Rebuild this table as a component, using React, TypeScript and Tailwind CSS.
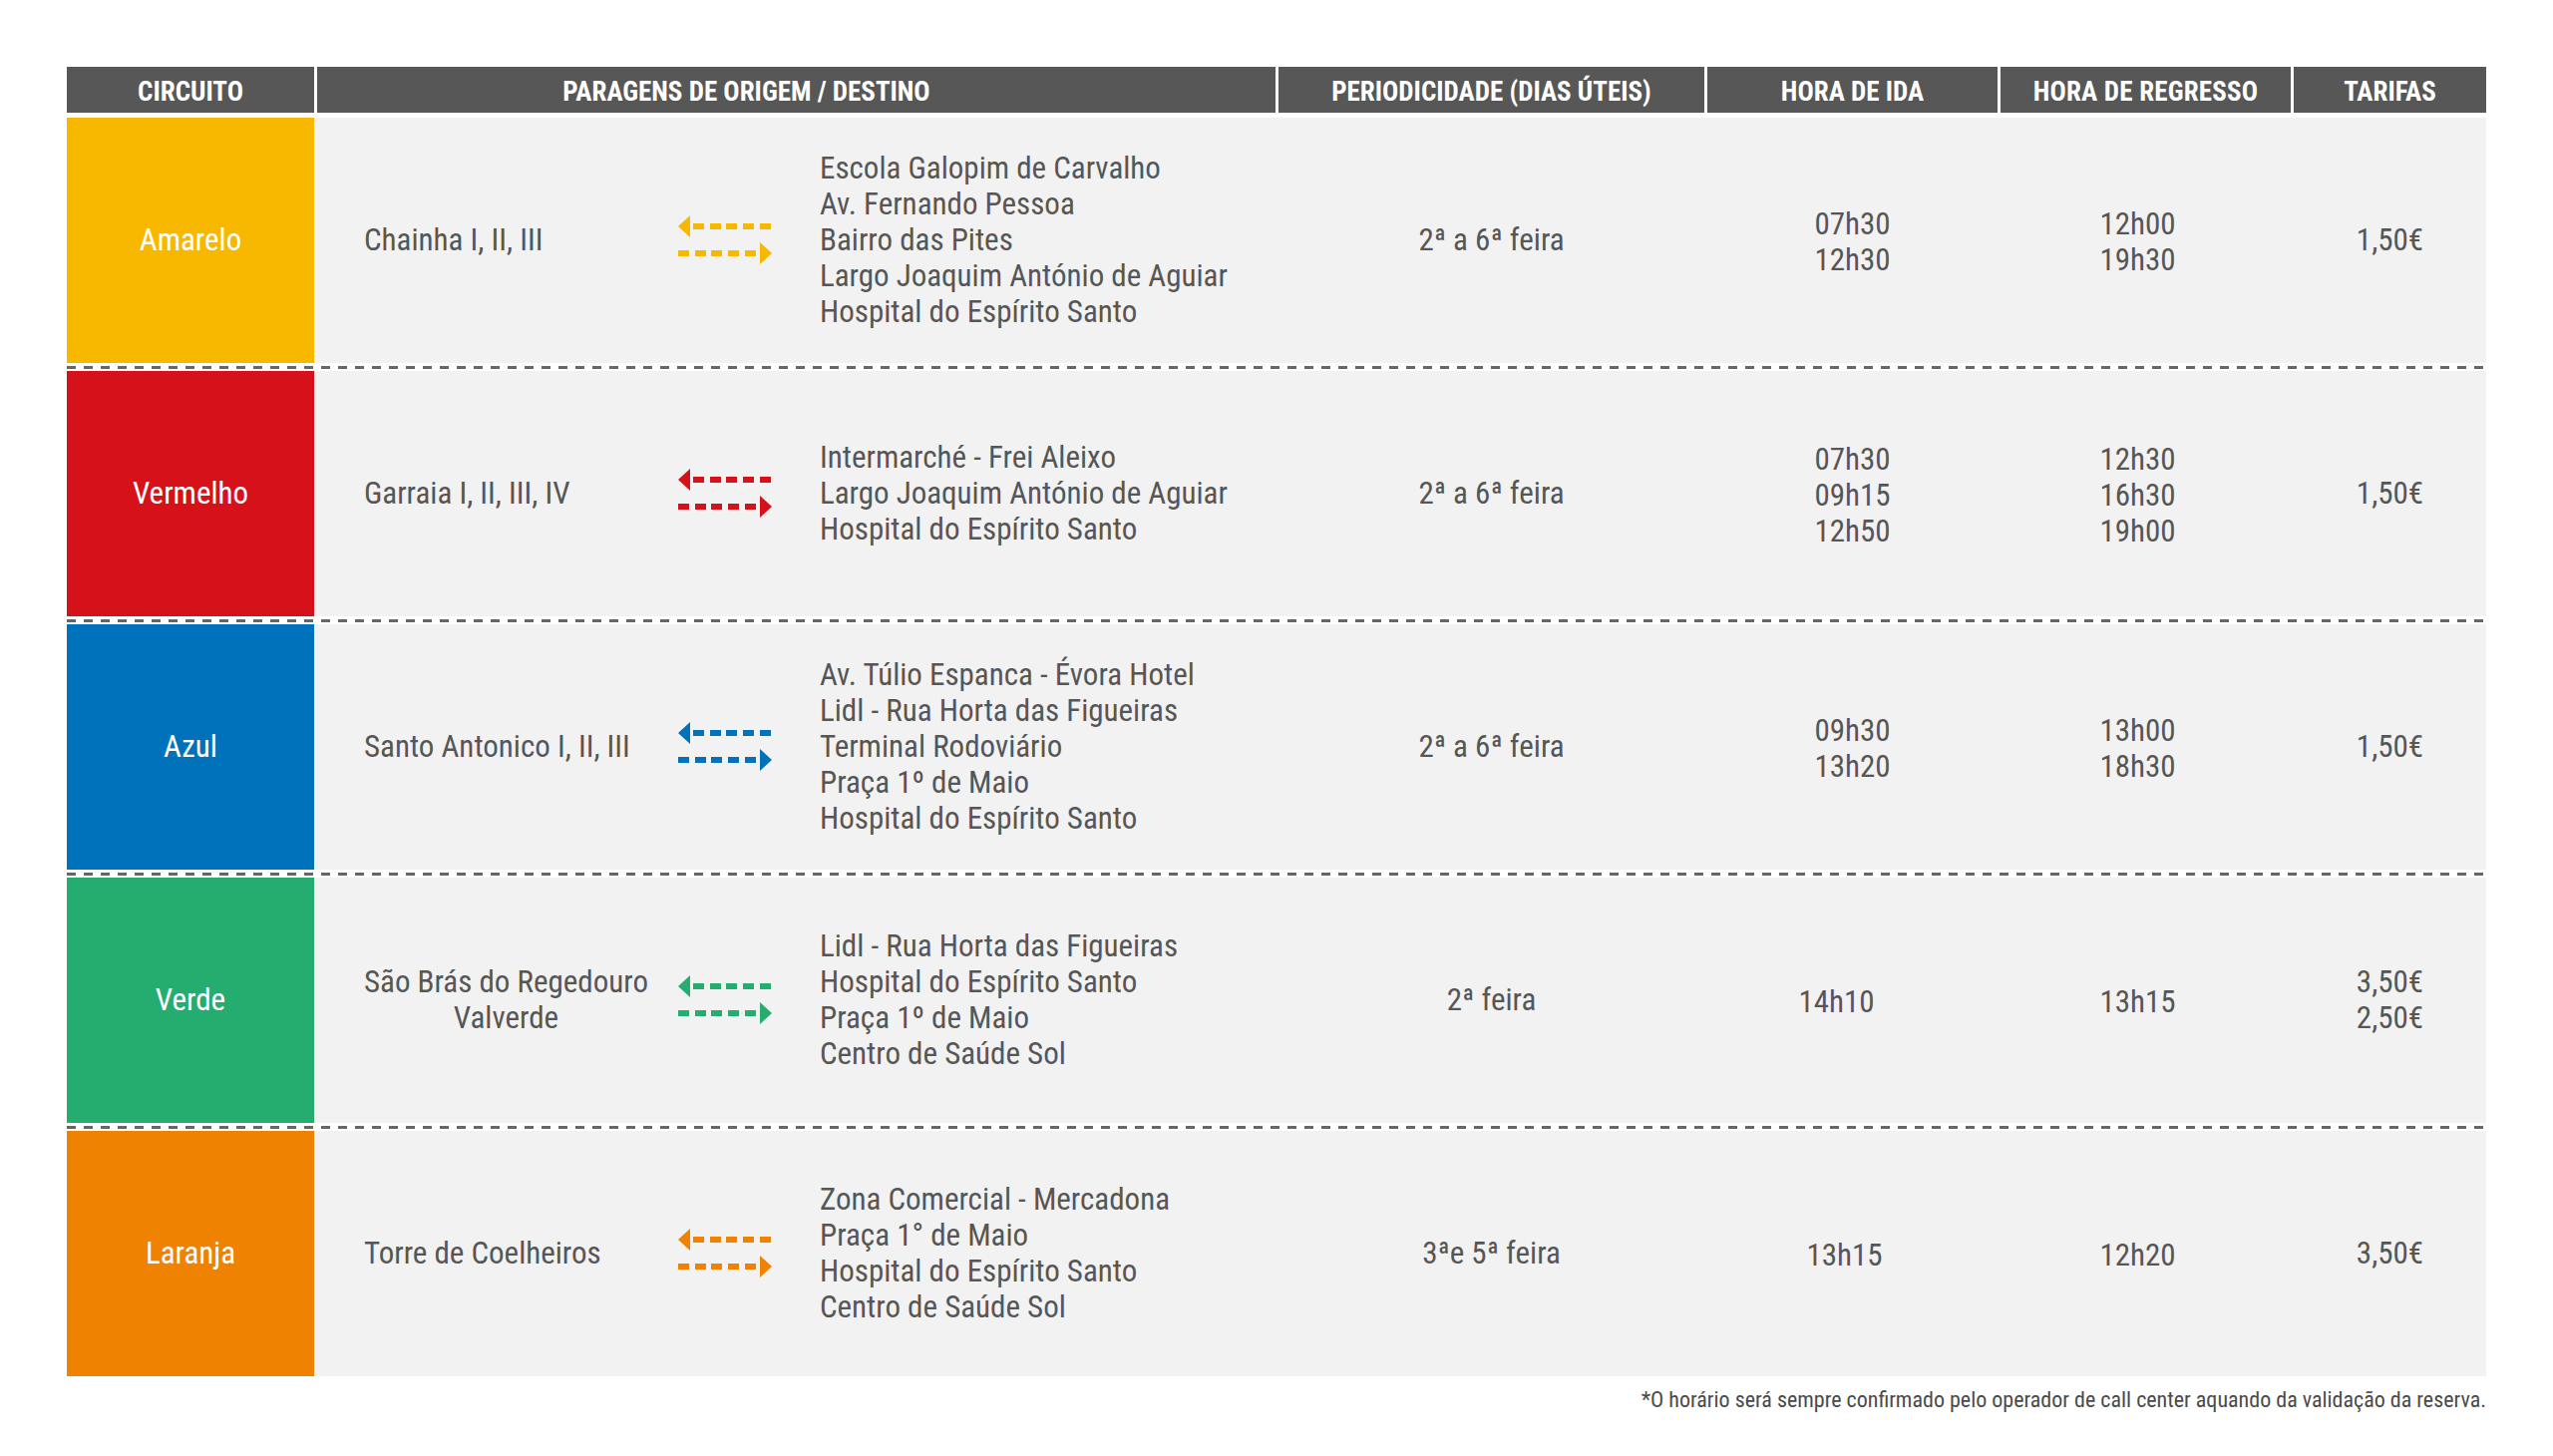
import React from 'react'

type Row = {
  name: string
  bg: string
  arrow: string
  origin: string[]
  stops: string[]
  period: string
  ida: string[]
  idaShift?: string
  regresso: string[]
  tarifas: string[]
}

const rows: Row[] = [
  {
    name: 'Amarelo',
    bg: 'bg-[#f9b800]',
    arrow: '#f9b800',
    origin: ['Chainha I, II, III'],
    stops: [
      'Escola Galopim de Carvalho',
      'Av. Fernando Pessoa',
      'Bairro das Pites',
      'Largo Joaquim António de Aguiar',
      'Hospital do Espírito Santo',
    ],
    period: '2ª a 6ª feira',
    ida: ['07h30', '12h30'],
    regresso: ['12h00', '19h30'],
    tarifas: ['1,50€'],
  },
  {
    name: 'Vermelho',
    bg: 'bg-[#d7111a]',
    arrow: '#d7111a',
    origin: ['Garraia I, II, III, IV'],
    stops: ['Intermarché - Frei Aleixo', 'Largo Joaquim António de Aguiar', 'Hospital do Espírito Santo'],
    period: '2ª a 6ª feira',
    ida: ['07h30', '09h15', '12h50'],
    regresso: ['12h30', '16h30', '19h00'],
    tarifas: ['1,50€'],
  },
  {
    name: 'Azul',
    bg: 'bg-[#0072bb]',
    arrow: '#0072bb',
    origin: ['Santo Antonico I, II, III'],
    stops: [
      'Av. Túlio Espanca - Évora Hotel',
      'Lidl - Rua Horta das Figueiras',
      'Terminal Rodoviário',
      'Praça 1º de Maio',
      'Hospital do Espírito Santo',
    ],
    period: '2ª a 6ª feira',
    ida: ['09h30', '13h20'],
    regresso: ['13h00', '18h30'],
    tarifas: ['1,50€'],
  },
  {
    name: 'Verde',
    bg: 'bg-[#25ac6f]',
    arrow: '#25ac6f',
    origin: ['São Brás do Regedouro', 'Valverde'],
    stops: ['Lidl - Rua Horta das Figueiras', 'Hospital do Espírito Santo', 'Praça 1º de Maio', 'Centro de Saúde Sol'],
    period: '2ª feira',
    ida: ['14h10'],
    idaShift: 'pr-[32px]',
    regresso: ['13h15'],
    tarifas: ['3,50€', '2,50€'],
  },
  {
    name: 'Laranja',
    bg: 'bg-[#ef8200]',
    arrow: '#ef8200',
    origin: ['Torre de Coelheiros'],
    stops: ['Zona Comercial - Mercadona', 'Praça 1° de Maio', 'Hospital do Espírito Santo', 'Centro de Saúde Sol'],
    period: '3ªe 5ª feira',
    ida: ['13h15'],
    idaShift: 'pr-[16px]',
    regresso: ['12h20'],
    tarifas: ['3,50€'],
  },
]

const headers = [
  { label: 'CIRCUITO', w: 'w-[248px]' },
  { label: 'PARAGENS DE ORIGEM / DESTINO', w: 'w-[961px] pr-[100px]' },
  { label: 'PERIODICIDADE (DIAS ÚTEIS)', w: 'w-[427px]' },
  { label: 'HORA DE IDA', w: 'w-[291px]' },
  { label: 'HORA DE REGRESSO', w: 'w-[291px] tracking-[0.2px]' },
  { label: 'TARIFAS', w: 'w-[193px]' },
]

function Arrows({ color }: { color: string }) {
  return (
    <svg width="95" height="50" viewBox="0 0 95 50" className="shrink-0">
      {/* left arrow */}
      <polygon points="0,11 12,0 12,22" fill={color} />
      {[15, 32, 48, 65, 82].map((x) => (
        <rect key={x} x={x} y="8" width="11" height="6" fill={color} />
      ))}
      {/* right arrow */}
      {[0, 17, 33, 50, 67].map((x) => (
        <rect key={x} x={x} y="35" width="11" height="6" fill={color} />
      ))}
      <polygon points="82,27 94,38 82,49" fill={color} />
    </svg>
  )
}

function Lines({ items }: { items: string[] }) {
  return (
    <div className="flex flex-col items-center">
      {items.map((t) => (
        <span key={t}>{t}</span>
      ))}
    </div>
  )
}

function Separator() {
  return (
    <div className="h-[8px] flex items-center">
      <div className="h-[3px] w-full bg-[repeating-linear-gradient(90deg,#666_0_9px,transparent_9px_17px)]" />
    </div>
  )
}

export default function App() {
  return (
    <div className="w-[2560px] h-[1460px] bg-white font-['Liberation_Sans_Narrow','Roboto_Condensed','Open_Sans_Condensed','Open_Sans',sans-serif] font-stretch-condensed text-[#565656]">
      <div className="pt-[67px] pl-[67px] w-[2493px]">
        {/* header */}
        <div className="flex gap-[3px] h-[46px]">
          {headers.map((h) => (
            <div
              key={h.label}
              className={`${h.w} bg-[#575757] text-white font-bold text-[27px] pt-[4px] flex items-center justify-center`}
            >
              {h.label}
            </div>
          ))}
        </div>

        <div className="mt-[5px] flex flex-col">
          {rows.map((r, i) => (
            <React.Fragment key={r.name}>
              {i > 0 && <Separator />}
              <div className="flex gap-[3px] h-[246px] bg-[#f2f2f2] text-[31px] leading-[36px]">
                <div className={`w-[248px] ${r.bg} text-white flex items-center justify-center`}>{r.name}</div>

                <div className="w-[961px] flex items-center">
                  <div className="w-[362px] pl-[47px] flex items-center">
                    <div className="text-center">
                      {r.origin.map((o) => (
                        <div key={o}>{o}</div>
                      ))}
                    </div>
                  </div>
                  <Arrows color={r.arrow} />
                  <div className="pl-[47px] flex flex-col">
                    {r.stops.map((s) => (
                      <span key={s}>{s}</span>
                    ))}
                  </div>
                </div>

                <div className="w-[427px] flex items-center justify-center">{r.period}</div>
                <div className={`w-[291px] pt-[3px] flex items-center justify-center ${r.idaShift ?? ''}`}>
                  <Lines items={r.ida} />
                </div>
                <div className="w-[291px] pt-[3px] pr-[16px] flex items-center justify-center">
                  <Lines items={r.regresso} />
                </div>
                <div className="w-[193px] flex items-center justify-center">
                  <Lines items={r.tarifas} />
                </div>
              </div>
            </React.Fragment>
          ))}
        </div>

        <p className="mt-[11px] text-right text-[22px] leading-[26px] text-[#4a4a4a]">
          *O horário será sempre confirmado pelo operador de call center aquando da validação da reserva.
        </p>
      </div>
    </div>
  )
}
